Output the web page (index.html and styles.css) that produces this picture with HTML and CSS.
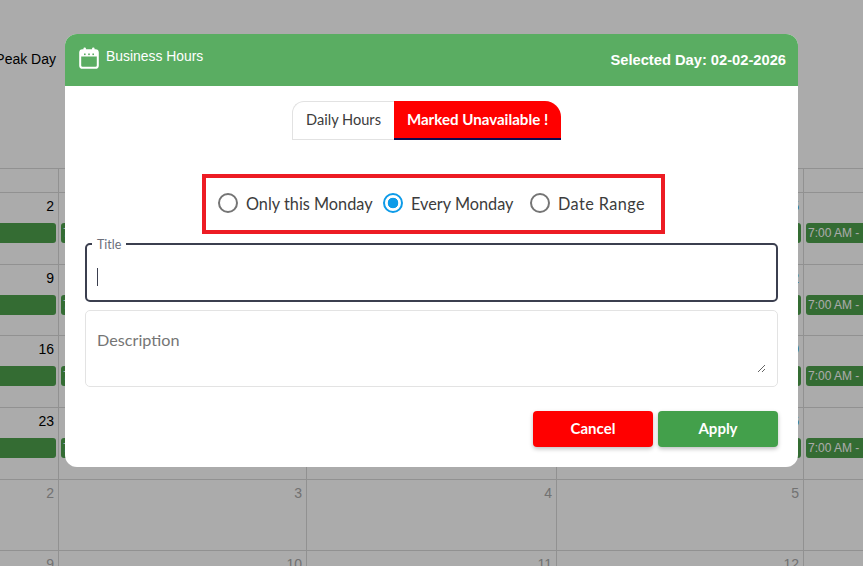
FILE: index.html
```html
<!DOCTYPE html>
<html lang="en">
<head>
    <meta charset="UTF-8">
    <meta name="viewport" content="width=device-width, initial-scale=1.0">
    <title>Business Hours</title>
    <link rel="stylesheet" href="styles.css">
</head>
<body>
    <div class="calendar">
        <div class="calendar-top"><span class="peak-label">Peak Day</span></div>
        <div class="calendar-grid">
            <div class="head-cell"></div><div class="head-cell"></div><div class="head-cell"></div><div class="head-cell"></div><div class="head-cell"></div>

            <div class="day"><span class="num">2</span><div class="slot">7:00 AM - 10:00 PM</div></div>
            <div class="day"><span class="num">3</span><div class="slot">7:00 AM - 10:00 PM</div></div>
            <div class="day"><span class="num">4</span><div class="slot">7:00 AM - 10:00 PM</div></div>
            <div class="day"><span class="num link">5</span><div class="slot">7:00 AM - 10:00 PM</div></div>
            <div class="day"><span class="num">6</span><div class="slot">7:00 AM - 10:00 PM</div></div>

            <div class="day"><span class="num">9</span><div class="slot">7:00 AM - 10:00 PM</div></div>
            <div class="day"><span class="num">10</span><div class="slot">7:00 AM - 10:00 PM</div></div>
            <div class="day"><span class="num">11</span><div class="slot">7:00 AM - 10:00 PM</div></div>
            <div class="day"><span class="num link">12</span><div class="slot">7:00 AM - 10:00 PM</div></div>
            <div class="day"><span class="num">13</span><div class="slot">7:00 AM - 10:00 PM</div></div>

            <div class="day"><span class="num">16</span><div class="slot">7:00 AM - 10:00 PM</div></div>
            <div class="day"><span class="num">17</span><div class="slot">7:00 AM - 10:00 PM</div></div>
            <div class="day"><span class="num">18</span><div class="slot">7:00 AM - 10:00 PM</div></div>
            <div class="day"><span class="num link">19</span><div class="slot">7:00 AM - 10:00 PM</div></div>
            <div class="day"><span class="num">20</span><div class="slot">7:00 AM - 10:00 PM</div></div>

            <div class="day"><span class="num">23</span><div class="slot">7:00 AM - 10:00 PM</div></div>
            <div class="day"><span class="num">24</span><div class="slot">7:00 AM - 10:00 PM</div></div>
            <div class="day"><span class="num">25</span><div class="slot">7:00 AM - 10:00 PM</div></div>
            <div class="day"><span class="num link">26</span><div class="slot">7:00 AM - 10:00 PM</div></div>
            <div class="day"><span class="num">27</span><div class="slot">7:00 AM - 10:00 PM</div></div>

            <div class="day muted"><span class="num">2</span></div>
            <div class="day muted"><span class="num">3</span></div>
            <div class="day muted"><span class="num">4</span></div>
            <div class="day muted"><span class="num">5</span></div>
            <div class="day muted"><span class="num">6</span></div>

            <div class="day muted"><span class="num">9</span></div>
            <div class="day muted"><span class="num">10</span></div>
            <div class="day muted"><span class="num">11</span></div>
            <div class="day muted"><span class="num">12</span></div>
            <div class="day muted"><span class="num">13</span></div>
        </div>
    </div>

    <div class="backdrop"></div>

    <div class="modal">
        <div class="modal-header">
            <div class="modal-title">
                <svg class="cal-icon" width="20" height="22" viewBox="0 0 20 22" fill="none">
                    <rect x="1.2" y="3.2" width="17.6" height="17.6" rx="2.4" stroke="#fff" stroke-width="2"/>
                    <rect x="1.5" y="4" width="17" height="5.5" fill="#fff"/>
                    <rect x="4.5" y="0.5" width="2.4" height="4" rx="1" fill="#fff"/>
                    <rect x="13.1" y="0.5" width="2.4" height="4" rx="1" fill="#fff"/>
                    <g fill="#5aad62">
                        <rect x="5" y="6.5" width="1.6" height="1.6"/>
                        <rect x="9.2" y="6.5" width="1.6" height="1.6"/>
                        <rect x="13.4" y="6.5" width="1.6" height="1.6"/>
                    </g>
                </svg>
                <span>Business Hours</span>
            </div>
            <div class="selected-day">Selected Day: 02-02-2026</div>
        </div>

        <div class="modal-body">
            <div class="tabs">
                <button type="button" class="tab">Daily Hours</button>
                <button type="button" class="tab active">Marked Unavailable !</button>
            </div>

            <div class="repeat-box">
                <label class="radio"><input type="radio" name="repeat"><span>Only this Monday</span></label>
                <label class="radio"><input type="radio" name="repeat" checked><span>Every Monday</span></label>
                <label class="radio"><input type="radio" name="repeat"><span>Date Range</span></label>
            </div>

            <fieldset class="title-field">
                <legend>Title</legend>
                <span class="caret"></span>
            </fieldset>

            <div class="desc-box">
                <textarea class="desc-input" placeholder="Description"></textarea>
            </div>

            <div class="actions">
                <button type="button" class="btn btn-cancel">Cancel</button>
                <button type="button" class="btn btn-apply">Apply</button>
            </div>
        </div>
    </div>
</body>
</html>
```

FILE: styles.css
```css
html, body {
    margin: 0;
    height: 100%;
    overflow: hidden;
}
body {
    background: #fff;
    font-family: 'Liberation Sans', Arial, sans-serif;
    color: #000;
}
.calendar {
    margin-left: -190px;
    width: 1300px;
}
.calendar-top {
    height: 168px;
    box-sizing: border-box;
    padding: 51px 0 0 190px;
}
.peak-label {
    display: block;
    width: 56px;
    font-size: 14px;
    line-height: 16px;
    white-space: nowrap;
    direction: rtl;
    color: #000;
}
.calendar-grid {
    display: grid;
    grid-template-columns: 249px 248px 250px 247px 249px;
    grid-template-rows: 24px 72px 71px 72px 72px 71px 72px;
    border-top: 1px solid #d9d9d9;
}
.head-cell,
.day {
    box-sizing: border-box;
    border-right: 1px solid #d9d9d9;
    border-bottom: 1px solid #d9d9d9;
}
.day {
    padding: 5px 4px 0 2px;
    overflow: hidden;
}
.num {
    display: block;
    height: 16px;
    margin-bottom: 9px;
    font-size: 14px;
    line-height: 16px;
    text-align: right;
}
.num.link {
    color: #1976d2;
}
.muted .num {
    color: #aaa;
}
.slot {
    height: 20px;
    margin-right: -2px;
    padding-left: 2px;
    background: #4ea14d;
    border-radius: 3px;
    color: #fff;
    font-size: 12px;
    line-height: 20px;
    white-space: nowrap;
    overflow: hidden;
}

.backdrop {
    position: fixed;
    inset: 0;
    background: rgba(0, 0, 0, 0.33);
}
.modal {
    position: fixed;
    left: 65px;
    top: 34px;
    width: 733px;
    height: 433px;
    background: #fff;
    border-radius: 12px;
    overflow: hidden;
}
.modal-header {
    height: 52px;
    box-sizing: border-box;
    padding: 0 12px 0 14px;
    background: #5aad62;
    color: #fff;
    display: flex;
    justify-content: space-between;
    align-items: center;
}
.modal-title {
    display: flex;
    align-items: flex-start;
    gap: 7px;
    font-size: 13.9px;
    line-height: 16px;
    margin-top: -4px;
}
.cal-icon {
    display: block;
    margin-top: -1px;
}
.selected-day {
    font-size: 14.7px;
    font-weight: 700;
}
.modal-body {
    padding: 15px 20px 0;
    font-family: 'Lato', 'Open Sans', sans-serif;
}
.tabs {
    display: flex;
    justify-content: center;
    padding-right: 10px;
}
.tab {
    height: 39px;
    width: 102px;
    box-sizing: border-box;
    padding: 0 0 2px;
    border: 1px solid #e2e2e2;
    border-right: none;
    border-radius: 12px 0 0 0;
    background: #fff;
    color: #3c3c3c;
    font-family: inherit;
    font-size: 14.6px;
}
.tab.active {
    width: 167px;
    border: none;
    border-bottom: 2px solid #0b0b4f;
    border-radius: 0 16px 0 0;
    background: #f00;
    color: #fff;
    font-size: 15.1px;
    font-weight: 700;
}
.repeat-box {
    width: 463px;
    height: 60px;
    box-sizing: border-box;
    margin: 34px 0 0 117px;
    padding: 0 0 2px 12px;
    border: 4px solid #ed1c24;
    display: grid;
    grid-template-columns: 165px 147px auto;
    align-items: center;
}
.radio {
    display: flex;
    align-items: center;
    gap: 8px;
    color: #3c3c3c;
    font-size: 16.3px;
}
.radio:last-child span {
    letter-spacing: 0.4px;
}
.radio input {
    appearance: none;
    width: 20px;
    height: 20px;
    margin: 0;
    border: 2px solid #757575;
    border-radius: 50%;
    background: #fff;
}
.radio input:checked {
    border-color: #0d9be8;
    background: radial-gradient(circle, #0d9be8 0 5px, #fff 5.6px);
}
.title-field {
    display: flex;
    align-items: center;
    height: 59px;
    box-sizing: border-box;
    margin: 9px 0 0;
    padding: 0 10px;
    border: 2px solid #3b3f4f;
    border-radius: 5px;
    min-width: 0;
}
.title-field legend {
    height: 2px;
    margin-left: -5px;
    padding: 0 5px;
    color: #6b6e7a;
    font-size: 12.5px;
    line-height: 3px;
}
.caret {
    width: 1px;
    height: 18px;
    margin-top: 8px;
    background: #3b3f4f;
}
.desc-box {
    display: flex;
    height: 77px;
    box-sizing: border-box;
    margin-top: 8px;
    padding: 19px 11px 13px;
    border: 1px solid #e3e3e3;
    border-radius: 5px;
}
.desc-input {
    flex: 1;
    display: block;
    margin: 0;
    padding: 0;
    border: none;
    outline: none;
    font-family: inherit;
    font-size: 16.2px;
    line-height: 20px;
}
.desc-input::placeholder {
    color: #757575;
}
.actions {
    display: flex;
    justify-content: flex-end;
    gap: 5px;
    margin-top: 24px;
}
.btn {
    width: 120px;
    height: 36px;
    padding: 0 0 2px;
    border: none;
    border-radius: 4px;
    color: #fff;
    font-family: inherit;
    font-size: 15px;
    font-weight: 700;
    box-shadow: 0 2px 4px rgba(0, 0, 0, 0.25);
}
.btn-cancel {
    background: #f00;
}
.btn-apply {
    background: #43a04b;
}
```
